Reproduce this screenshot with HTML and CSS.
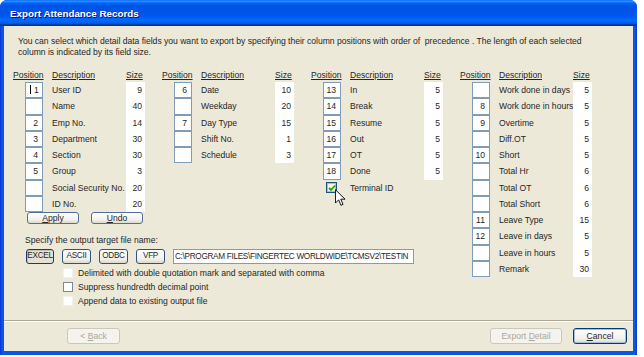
FILE: index.html
```html
<!DOCTYPE html>
<html lang="en">
<head>
  <meta charset="UTF-8">
  <title>Export Attendance Records</title>
  <link rel="stylesheet" href="styles.css">
</head>
<body>
<div class="window">
  <div class="titlebar"><span class="title">Export Attendance Records</span></div>
  <div class="client">
    <div class="content">
      <p class="intro">You can select which detail data fields you want to export by specifying their column positions with order of&nbsp; precedence . The length of each selected<br>column is indicated by its field size.</p>

      <div class="fields">
        <div class="left">
          <div class="groups">
            <!-- column 1 -->
            <div class="col">
              <div class="grid">
                <span class="hd">Position</span><span class="hd desc">Description</span><span class="hd">Size</span>
                <span class="pos"><span class="box editing"><i class="caret"></i>1</span></span><span class="desc">User ID</span><span class="size">9</span>
                <span class="pos"><span class="box"></span></span><span class="desc">Name</span><span class="size">40</span>
                <span class="pos"><span class="box">2</span></span><span class="desc">Emp No.</span><span class="size">14</span>
                <span class="pos"><span class="box">3</span></span><span class="desc">Department</span><span class="size">30</span>
                <span class="pos"><span class="box">4</span></span><span class="desc">Section</span><span class="size">30</span>
                <span class="pos"><span class="box">5</span></span><span class="desc">Group</span><span class="size">3</span>
                <span class="pos"><span class="box"></span></span><span class="desc">Social Security No.</span><span class="size">20</span>
                <span class="pos"><span class="box"></span></span><span class="desc">ID No.</span><span class="size">20</span>
              </div>
              <div class="actions">
                <button class="btn small"><u>A</u>pply</button>
                <button class="btn small"><u>U</u>ndo</button>
              </div>
            </div>

            <!-- column 2 -->
            <div class="col">
              <div class="grid">
                <span class="hd">Position</span><span class="hd desc">Description</span><span class="hd">Size</span>
                <span class="pos"><span class="box">6</span></span><span class="desc">Date</span><span class="size">10</span>
                <span class="pos"><span class="box"></span></span><span class="desc">Weekday</span><span class="size">20</span>
                <span class="pos"><span class="box">7</span></span><span class="desc">Day Type</span><span class="size">15</span>
                <span class="pos"><span class="box"></span></span><span class="desc">Shift No.</span><span class="size">1</span>
                <span class="pos"><span class="box"></span></span><span class="desc">Schedule</span><span class="size">3</span>
              </div>
            </div>

            <!-- column 3 -->
            <div class="col">
              <div class="grid">
                <span class="hd">Position</span><span class="hd desc">Description</span><span class="hd">Size</span>
                <span class="pos"><span class="box">13</span></span><span class="desc">In</span><span class="size">5</span>
                <span class="pos"><span class="box">14</span></span><span class="desc">Break</span><span class="size">5</span>
                <span class="pos"><span class="box">15</span></span><span class="desc">Resume</span><span class="size">5</span>
                <span class="pos"><span class="box">16</span></span><span class="desc">Out</span><span class="size">5</span>
                <span class="pos"><span class="box">17</span></span><span class="desc">OT</span><span class="size">5</span>
                <span class="pos"><span class="box">18</span></span><span class="desc">Done</span><span class="size">5</span>
                <span class="pos check-cell">
                  <span class="check checked hover">
                    <svg width="8" height="8" viewBox="0 0 8 8"><path d="M1 4 L3 6 L7 1.5" fill="none" stroke="#21A121" stroke-width="1.8"/></svg>
                  </span>
                  <svg class="cursor" width="11" height="18" viewBox="0 0 12 19"><path d="M0.5 0.5 L0.5 15 L4 11.5 L6.5 17.5 L8.8 16.5 L6.3 10.8 L11 10.8 Z" fill="#fff" stroke="#000" stroke-width="1" stroke-linejoin="miter"/></svg>
                </span><span class="desc">Terminal ID</span><span></span>
              </div>
            </div>
          </div>

          <div class="output">
            <div class="output-label">Specify the output target file name:</div>
            <div class="file-row">
              <button class="btn type pressed">EXCEL</button>
              <button class="btn type">ASCII</button>
              <button class="btn type">ODBC</button>
              <button class="btn type">VFP</button>
              <span class="path">C:\PROGRAM FILES\FINGERTEC WORLDWIDE\TCMSV2\TESTIN</span>
            </div>
            <div class="checks">
              <label class="opt"><span class="check faint"></span>Delimited with double quotation mark and separated with comma</label>
              <label class="opt"><span class="check"></span>Suppress hundredth decimal point</label>
              <label class="opt"><span class="check faint"></span>Append data to existing output file</label>
            </div>
          </div>
        </div>

        <!-- column 4 -->
        <div class="col">
          <div class="grid">
            <span class="hd">Position</span><span class="hd desc">Description</span><span class="hd">Size</span>
            <span class="pos"><span class="box"></span></span><span class="desc">Work done in days</span><span class="size">5</span>
            <span class="pos"><span class="box">8</span></span><span class="desc">Work done in hours</span><span class="size">5</span>
            <span class="pos"><span class="box">9</span></span><span class="desc">Overtime</span><span class="size">5</span>
            <span class="pos"><span class="box"></span></span><span class="desc">Diff.OT</span><span class="size">5</span>
            <span class="pos"><span class="box">10</span></span><span class="desc">Short</span><span class="size">5</span>
            <span class="pos"><span class="box"></span></span><span class="desc">Total Hr</span><span class="size">6</span>
            <span class="pos"><span class="box"></span></span><span class="desc">Total OT</span><span class="size">6</span>
            <span class="pos"><span class="box"></span></span><span class="desc">Total Short</span><span class="size">6</span>
            <span class="pos"><span class="box">11</span></span><span class="desc">Leave Type</span><span class="size">15</span>
            <span class="pos"><span class="box">12</span></span><span class="desc">Leave in days</span><span class="size">5</span>
            <span class="pos"><span class="box"></span></span><span class="desc">Leave in hours</span><span class="size">5</span>
            <span class="pos"><span class="box"></span></span><span class="desc">Remark</span><span class="size">30</span>
          </div>
        </div>
      </div>
    </div>

    <div class="footer">
      <button class="btn foot disabled">&lt; <u>B</u>ack</button>
      <button class="btn foot wide disabled">Export <u>D</u>etail</button>
      <button class="btn foot default"><u>C</u>ancel</button>
    </div>
  </div>
</div>
</body>
</html>
```

FILE: styles.css
```css
html, body {
  margin: 0;
  padding: 0;
  background: #fff;
  font-family: "Liberation Sans", Arial, sans-serif;
  font-size: 8.6px;
  color: #262626;
}

/* window frame */
.window {
  width: 637px;
  height: 355px;
  border-radius: 7px 7px 0 0;
  background: linear-gradient(to right, #0831D9, #0A56E6 2px, #0A56E6 calc(100% - 2px), #0831D9);
  display: flex;
  flex-direction: column;
  overflow: hidden;
}

.titlebar {
  flex: none;
  height: 26px;
  padding-left: 10px;
  display: flex;
  align-items: center;
  background: linear-gradient(to bottom, #0058EE 0%, #3593FF 4%, #288EFF 6%, #127DFF 8%, #036FFC 10%, #0262EE 14%, #0057E5 20%, #0054E3 24%, #0055EB 56%, #005BF5 66%, #026AFE 76%, #0062EF 86%, #0052D6 92%, #0040AB 94%, #003092 100%);
}

.title {
  color: #fff;
  font-weight: bold;
  font-size: 9.8px;
  text-shadow: 1px 1px #0F1089;
}

.client {
  flex: 1;
  margin: 0 4px 4px;
  background: #ECE9D8;
  display: flex;
  flex-direction: column;
}

.content {
  flex: 1;
  padding: 10px 0 0 9px;
}

.intro {
  margin: 0 0 10px 5px;
  line-height: 11px;
  white-space: nowrap;
  letter-spacing: -0.02px;
}

/* field tables */
.fields {
  display: flex;
}

.left {
  width: 447px;
}

.groups {
  display: flex;
}

.col {
  width: 149px;
}

.grid {
  display: grid;
  grid-template-columns: 30px 83px 19px;
  grid-template-rows: 14px;
  grid-auto-rows: 16.25px;
}

.hd {
  text-decoration: underline;
  line-height: 14px;
  white-space: nowrap;
}

.desc {
  padding-left: 9px;
  line-height: 16.25px;
  white-space: nowrap;
}

.hd.desc {
  line-height: 14px;
}

.pos {
  display: flex;
  justify-content: flex-end;
}

.box {
  width: 18px;
  box-sizing: border-box;
  border: 1px solid #7F9DB9;
  background: #fff;
  text-align: right;
  padding-right: 4px;
  line-height: 14px;
}

.box.editing {
  text-align: left;
  padding: 0 0 0 4px;
  white-space: nowrap;
}

.caret {
  display: inline-block;
  width: 1px;
  height: 9px;
  background: #000;
  vertical-align: -1px;
  margin-right: 3px;
}

.size {
  background: #fff;
  text-align: right;
  padding-right: 3px;
  line-height: 16.25px;
}

/* checkboxes */
.check {
  width: 10px;
  height: 10px;
  box-sizing: border-box;
  background: #fff;
  border: 1px solid #7C8898;
  display: inline-flex;
  align-items: center;
  justify-content: center;
}

.check.faint {
  border-color: #F2F1EA;
}

.check.hover {
  border: 1px solid #1C5180;
  box-shadow: inset 0 0 0 1px #F8B33A;
  background: #FDF3D8;
}

.check-cell {
  position: relative;
  justify-content: flex-end;
  align-items: center;
  padding-right: 4px;
}

.check-cell .check {
  width: 11px;
  height: 11px;
}

.cursor {
  position: absolute;
  left: 24px;
  top: 9px;
}

/* buttons */
.btn {
  font-family: inherit;
  font-size: 8.6px;
  color: #262626;
  padding: 0;
  box-sizing: border-box;
  border: 1px solid #003C74;
  border-radius: 3px;
  background: linear-gradient(to bottom, #FFFFFF, #F1F0EA 70%, #DCD8CC);
  line-height: 1;
}

.actions {
  display: flex;
  gap: 12px;
  padding-left: 14px;
}

.btn.small {
  width: 52px;
  height: 12px;
  border-color: #4E6E9C;
}

.output {
  padding-left: 12px;
  margin-top: 10px;
}

.output-label {
  line-height: 12px;
}

.file-row {
  display: flex;
  gap: 8px;
  margin-top: 3px;
  padding-left: 1px;
  height: 15px;
}

.btn.type {
  width: 29px;
  height: 15px;
  border-color: #33527A;
  font-size: 8.2px;
  letter-spacing: -0.3px;
}

.btn.type.pressed {
  width: 28px;
  background: #E3E1D6;
  border-color: #1E3A60;
  box-shadow: inset 1px 1px 0 #C5C2B2;
}

.path {
  width: 241px;
  height: 15px;
  box-sizing: border-box;
  border: 1px solid #7F9DB9;
  background: #fff;
  padding: 0 1px;
  font-size: 8.2px;
  line-height: 13px;
  white-space: nowrap;
  overflow: hidden;
  letter-spacing: -0.3px;
}

.checks {
  margin-top: 2px;
  padding-left: 38px;
}

.opt {
  display: flex;
  align-items: center;
  height: 14px;
  white-space: nowrap;
}

.opt .check {
  margin-right: 5px;
}

/* footer */
.footer {
  flex: none;
  height: 31px;
  box-sizing: border-box;
  border-top: 1px solid #ACA899;
  box-shadow: inset 0 1px #fff;
  display: flex;
  align-items: flex-start;
  gap: 11px;
  padding: 7px 6px 0 63px;
}

.btn.foot {
  width: 53px;
  height: 16px;
}

.btn.foot.wide {
  width: 72px;
  margin-left: auto;
}

.btn.disabled {
  color: #ACA899;
  border-color: #CAC8BB;
  background: #F4F3EE;
}

.btn.default {
  width: 54px;
  box-shadow: inset 0 0 0 1px #A6BDE6;
}
```
